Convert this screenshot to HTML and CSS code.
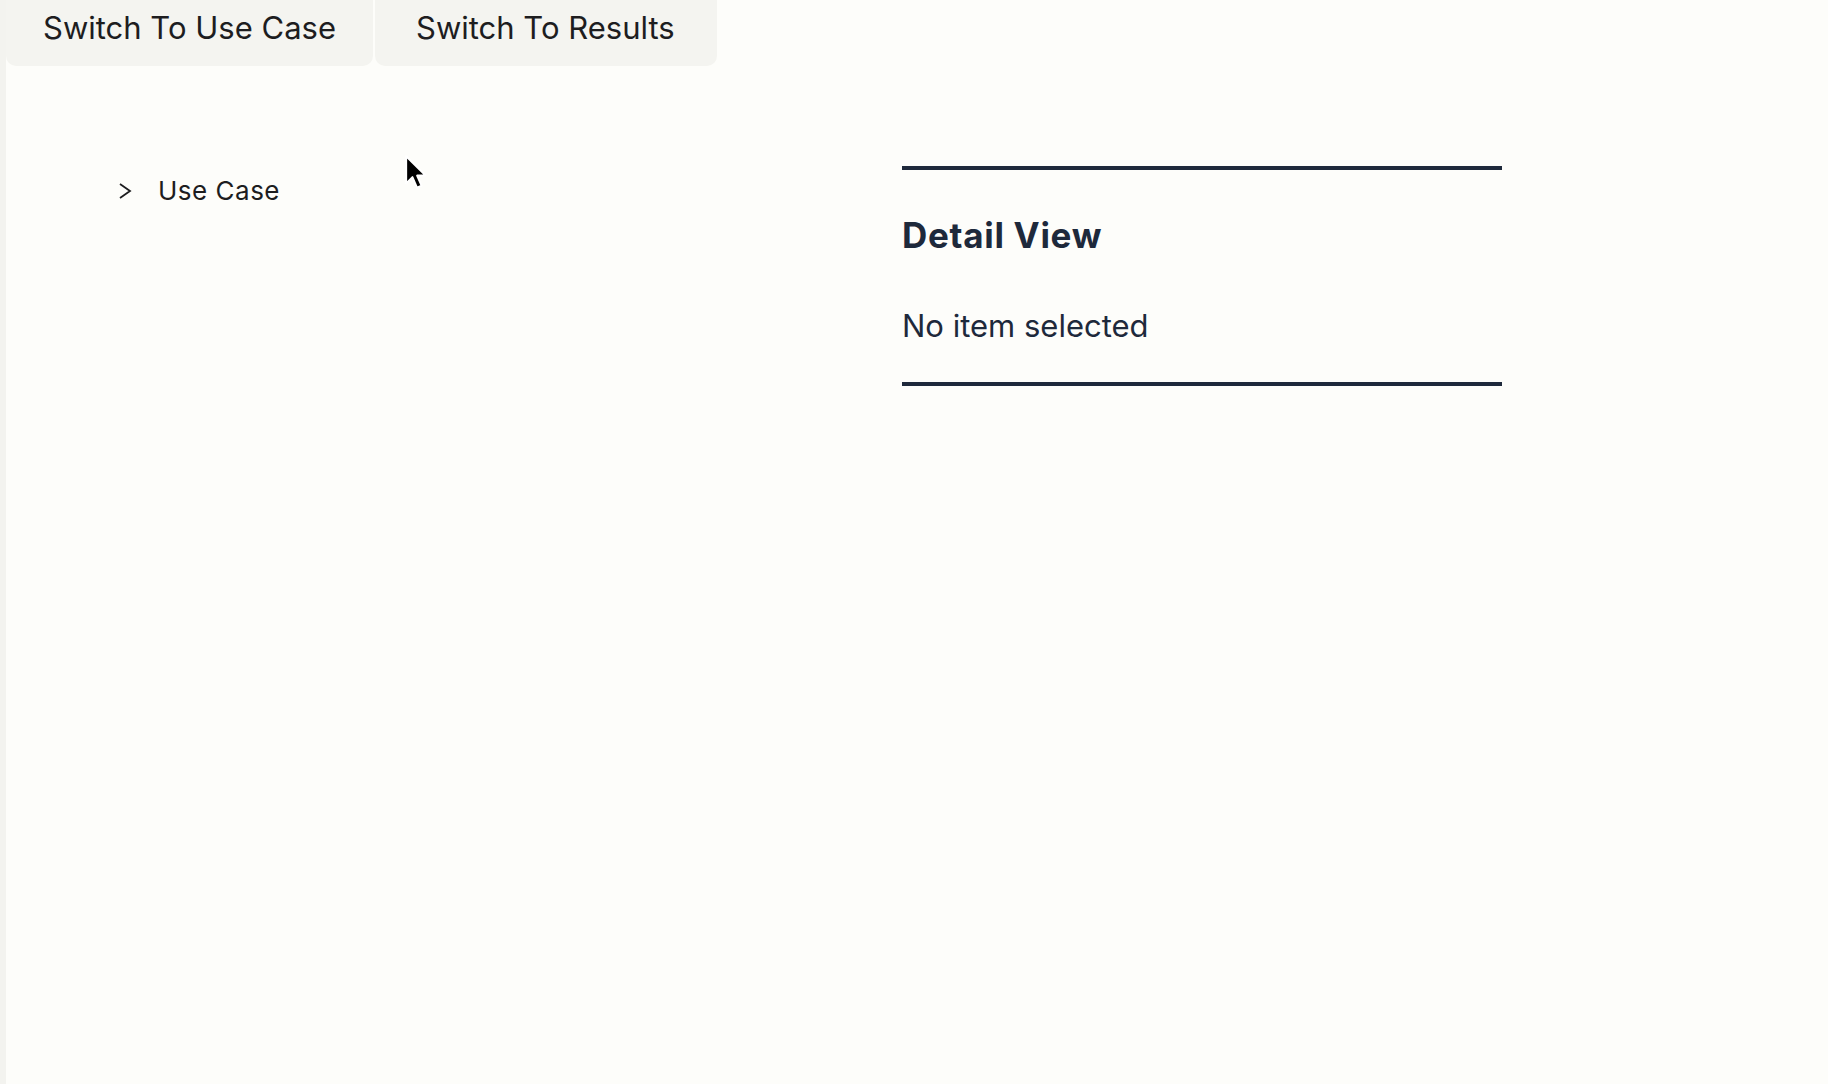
FILE: index.html
```html
<!DOCTYPE html>
<html lang="en">
<head>
<meta charset="utf-8">
<title>Use Case</title>
<link rel="stylesheet" href="styles.css">
</head>
<body>
<div class="app">
  <nav class="tabs">
    <button class="tab tab-usecase">Switch To Use Case</button>
    <button class="tab tab-results">Switch To Results</button>
  </nav>
  <main class="main">
    <section class="tree">
      <div class="tree-row">
        <svg class="chevron" width="14" height="18" viewBox="0 0 14 18"><polyline points="2,2 12,9 2,16" fill="none" stroke="#1d1d1f" stroke-width="1.8" stroke-linejoin="miter"/></svg>
        <span class="tree-label">Use Case</span>
      </div>
    </section>
    <section class="detail">
      <h2 class="detail-title">Detail View</h2>
      <p class="detail-text">No item selected</p>
    </section>
  </main>
  <svg class="cursor" width="26" height="37" viewBox="0 0 24 34"><path d="M2,2 L2,27 L7.8,21.3 L12,31 L16.2,29.2 L12.1,19.8 L20,19.8 Z" fill="#000" stroke="#fff" stroke-width="1.8" stroke-linejoin="round"/></svg>
</div>
</body>
</html>
```
FILE: styles.css
```css
html, body {
  margin: 0;
  padding: 0;
  height: 100%;
}
body {
  background: #fdfdfa;
  font-family: Inter, "Noto Sans", sans-serif;
  color: #1d1d1f;
}
.app {
  position: relative;
  min-height: 100%;
  border-left: 6px solid #f3f3ef;
  box-sizing: border-box;
}
.tabs {
  display: flex;
  gap: 2px;
  height: 66px;
}
.tab {
  border: 0;
  background: #f4f4f0;
  font-family: Inter, "Noto Sans", sans-serif;
  font-size: 31px;
  color: #1d1d1f;
  height: 66px;
  padding: 0 0 12px;
  border-radius: 0 0 10px 10px;
  cursor: pointer;
}
.tab-usecase {
  width: 367px;
  padding-left: 37px;
  text-align: left;
}
.tab-results {
  width: 342px;
  padding-left: 41px;
  text-align: left;
}
.main {
  display: grid;
  grid-template-columns: 784px 600px;
  padding-left: 112px;
  align-items: start;
}
.tree {
  padding-top: 109px;
}
.tree-row {
  display: flex;
  align-items: center;
  gap: 26px;
  height: 32px;
}
.chevron {
  display: block;
}
.tree-label {
  font-size: 26px;
  line-height: 32px;
  letter-spacing: 0.5px;
}
.detail {
  margin-top: 100px;
  border-top: 4px solid #1e293b;
  border-bottom: 4px solid #1e293b;
  color: #1e293b;
  padding-bottom: 37px;
}
.detail-title {
  margin: 45px 0 0;
  font-size: 35px;
  font-weight: 700;
  line-height: 41px;
  letter-spacing: 0.7px;
}
.detail-text {
  margin: 51px 0 0;
  font-size: 31px;
  line-height: 38px;
}
.cursor {
  position: absolute;
  left: 398px;
  top: 154px;
}
```
